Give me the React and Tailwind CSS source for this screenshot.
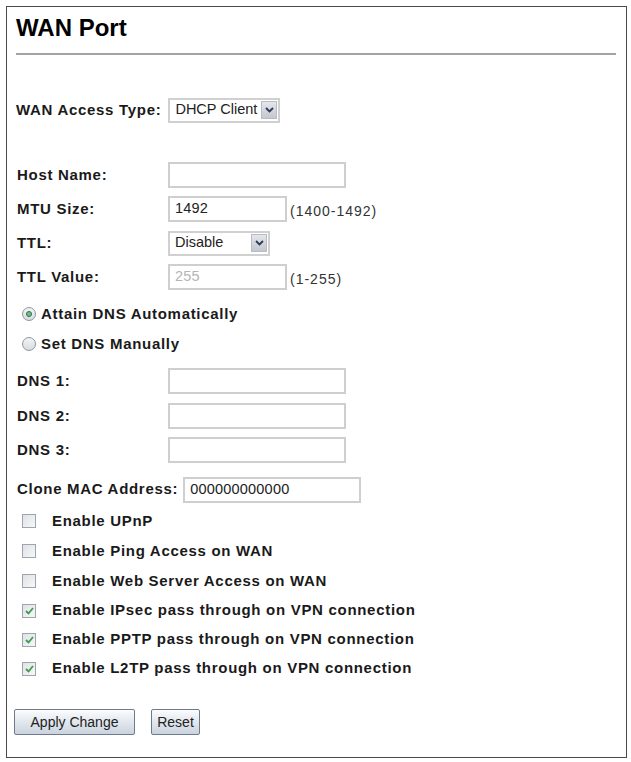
import { useState } from 'react'

const font = "font-['Liberation_Sans',Arial,sans-serif]"
const labelText = 'text-[15px] font-bold tracking-[0.7px] text-[#1a1a1a]'

function Arrow() {
  return (
    <span className="flex h-[18px] w-[16px] items-center justify-center border border-[#b9bcc4] bg-gradient-to-b from-[#e4e6ea] to-[#c3c7cf]">
      <svg width="9" height="6" viewBox="0 0 9 6">
        <path d="M1 1 L4.5 4.5 L8 1" fill="none" stroke="#2d3a55" strokeWidth="1.8" />
      </svg>
    </span>
  )
}

function Select({ value, width }) {
  return (
    <div
      className={`flex h-[25px] items-center justify-between gap-[3px] border-2 border-[#d0d0d0] bg-white pl-[5px] pr-[1px] text-[14.5px] text-[#222] ${width}`}
    >
      <span className="whitespace-nowrap">{value}</span>
      <Arrow />
    </div>
  )
}

function TextBox({ value = '', width, muted }) {
  return (
    <div
      className={`flex h-[26px] items-center border-2 border-[#cfcfcf] bg-white pl-[5px] text-[14.5px] tracking-[0.2px] ${
        muted ? 'text-[#b5b5b5]' : 'text-[#222]'
      } ${width}`}
    >
      {value}
    </div>
  )
}

function Hint({ children }) {
  return <span className="ml-[3px] mt-[5px] text-[14px] tracking-[1px] text-[#333]">{children}</span>
}

function Row({ label, children, className = 'h-[34px]' }) {
  return (
    <div className={`flex items-center ${className}`}>
      <div className={`w-[152px] pl-[1px] ${labelText}`}>{label}</div>
      {children}
    </div>
  )
}

function Radio({ checked, label, className }) {
  return (
    <div className={`flex items-center pl-[6px] ${className}`}>
      <span className="flex h-[14px] w-[14px] items-center justify-center rounded-full border border-[#8f959e] bg-gradient-to-b from-[#f3f3f3] to-[#d9dcdf]">
        {checked && <span className="h-[6px] w-[6px] rounded-full border border-[#2f6e48] bg-[#6fc08d]" />}
      </span>
      <span className={`ml-[5px] ${labelText}`}>{label}</span>
    </div>
  )
}

function Check({ checked, label, className }) {
  return (
    <div className={`flex items-center pl-[6px] ${className}`}>
      <span className="flex h-[14px] w-[14px] items-center justify-center border border-[#9ea4ad] bg-gradient-to-br from-[#dfe2e6] to-[#f7f7f7]">
        {checked && (
          <svg width="9" height="8" viewBox="0 0 9 8">
            <path d="M1 4 L3.5 6.5 L8 1" fill="none" stroke="#3f9a4c" strokeWidth="1.8" />
          </svg>
        )}
      </span>
      <span className={`ml-[16px] ${labelText}`}>{label}</span>
    </div>
  )
}

export default function App() {
  const [dns] = useState('auto')

  return (
    <div className={`h-[762px] w-[631px] bg-white p-[6px] ${font}`}>
      <div className="h-[752px] w-[621px] border border-[#4a4a4a] px-[9px] pt-[7px]">
        <h1 className="text-[24px] font-bold leading-[28px] text-black">WAN Port</h1>
        <div className="mt-[11px] mr-[1px] h-[2px] bg-[#a3a3a3]" />

        <div className="mt-[38px] flex h-[34px] items-center">
          <span className={`mr-[7px] ${labelText}`}>WAN Access Type:</span>
          <Select value="DHCP Client" width="w-[112px]" />
        </div>

        <Row label="Host Name:" className="mt-[31px] h-[34px]">
          <TextBox width="w-[178px]" />
        </Row>
        <Row label="MTU Size:">
          <TextBox value="1492" width="w-[119px]" />
          <Hint>(1400-1492)</Hint>
        </Row>
        <Row label="TTL:">
          <Select value="Disable" width="w-[102px]" />
        </Row>
        <Row label="TTL Value:">
          <TextBox value="255" width="w-[119px]" muted />
          <Hint>(1-255)</Hint>
        </Row>

        <Radio checked={dns === 'auto'} label="Attain DNS Automatically" className="mt-[5px] h-[30px]" />
        <Radio checked={dns === 'manual'} label="Set DNS Manually" className="h-[30px]" />

        <Row label="DNS 1:" className="mt-[5px] h-[34px]">
          <TextBox width="w-[178px]" />
        </Row>
        <Row label="DNS 2:" className="mt-[1px] h-[34px]">
          <TextBox width="w-[178px]" />
        </Row>
        <Row label="DNS 3:">
          <TextBox width="w-[178px]" />
        </Row>

        <div className="mt-[6px] flex h-[33px] items-center pl-[1px]">
          <span className={`mr-[5px] ${labelText}`}>Clone MAC Address:</span>
          <TextBox value="000000000000" width="w-[178px]" />
        </div>

        <Check label="Enable UPnP" className="h-[30px]" />
        <Check label="Enable Ping Access on WAN" className="h-[30px]" />
        <Check label="Enable Web Server Access on WAN" className="h-[30px]" />
        <Check checked label="Enable IPsec pass through on VPN connection" className="h-[29px]" />
        <Check checked label="Enable PPTP pass through on VPN connection" className="h-[29px]" />
        <Check checked label="Enable L2TP pass through on VPN connection" className="h-[29px]" />

        <div className="mt-[26px] flex gap-[16px]">
          <button className="-ml-[2px] h-[26px] w-[121px] rounded-[2px] border border-[#6f7b8c] bg-gradient-to-b from-[#fbfcfd] to-[#c9d3de] text-[14px] text-[#222]">
            Apply Change
          </button>
          <button className="h-[26px] w-[49px] rounded-[2px] border border-[#6f7b8c] bg-gradient-to-b from-[#fbfcfd] to-[#c9d3de] text-[14px] text-[#222]">
            Reset
          </button>
        </div>
      </div>
    </div>
  )
}
